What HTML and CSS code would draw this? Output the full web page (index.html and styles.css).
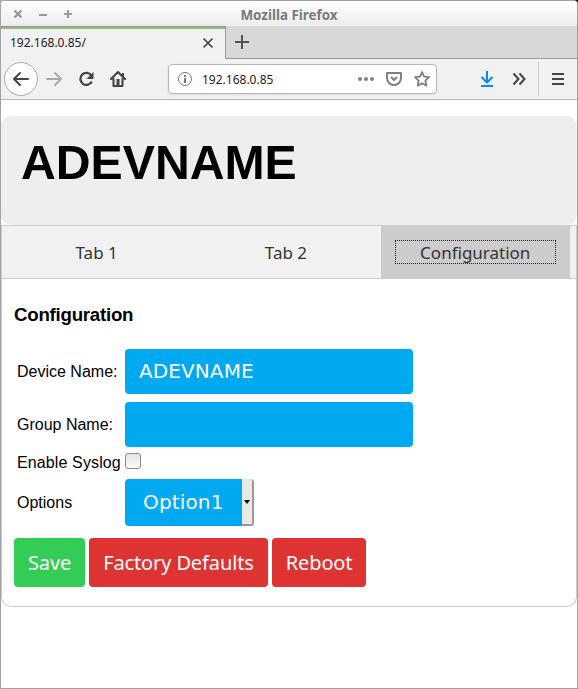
FILE: index.html
```html
<!DOCTYPE html>
<html lang="en">
<head>
<meta charset="utf-8">
<title>Mozilla Firefox</title>
<link rel="stylesheet" href="styles.css">
</head>
<body>
<div class="window">
  <header class="titlebar">
    <svg class="controls" width="76" height="26" viewBox="1 1 76 26" fill="none" stroke="#999" stroke-width="2">
      <path d="M14.5 10.5l7 7M21.5 10.5l-7 7" stroke-width="2.4"/><path d="M39 15h8M64 14h8M68 10v8"/>
    </svg>
    <span class="title">Mozilla Firefox</span>
  </header>
  <div class="tabstrip">
    <div class="browser-tab"><span>192.168.0.85/</span>
      <svg width="12" height="12" viewBox="0 0 12 12" fill="none" stroke="#444" stroke-width="1.7"><path d="M1.5 1.5l9 9M10.5 1.5l-9 9"/></svg>
    </div>
    <div class="new-tab"><svg width="14" height="14" viewBox="0 0 14 14" fill="none" stroke="#505050" stroke-width="2"><path d="M0 7h14M7 0v14"/></svg></div>
  </div>
  <div class="toolbar">
    <svg class="nav" width="160" height="40" viewBox="1 59 160 40" fill="none" stroke="#444" stroke-width="2" stroke-linecap="round" stroke-linejoin="round">
      <circle cx="21" cy="79" r="16.5" fill="#fff" stroke="#aaa" stroke-width="1"/>
      <path d="M28 79H14M20 73l-6 6 6 6"/>
      <path d="M47 79h14M55 73l6 6-6 6" stroke="#aaa"/>
      <path d="M91.3 75.5A6 6 0 1 0 91.8 81.5" stroke-width="2.3" stroke-linecap="butt"/>
      <path d="M93.5 72v7h-7z" fill="#444" stroke="none"/>
      <path d="M111 79l7-7 7 7M113.5 79v7h9v-7" stroke-width="2.1"/><path d="M123 73v3" stroke-linecap="butt"/>
      <path d="M116.5 79h3v7h-3z" fill="#444" stroke="none"/>
    </svg>
    <div class="urlbar">
      <svg width="16" height="16" viewBox="0 0 16 16" fill="none" stroke="#777"><circle cx="8" cy="8" r="6.5"/><path d="M8 7v5M8 4v2" stroke-width="2"/></svg>
      <span class="url">192.168.0.85</span>
      <svg width="76" height="20" viewBox="356 69 76 20" fill="none" stroke="#808080" stroke-width="2" stroke-linejoin="round">
        <g fill="#808080" stroke="none"><circle cx="360" cy="79" r="2"/><circle cx="366" cy="79" r="2"/><circle cx="372" cy="79" r="2"/></g>
        <path d="M387 73h14v5a7 7 0 0 1-14 0zM391 77l3 3 3-3"/>
        <path d="M422 72l2.1 4.600 4.900.6-3.600 3.400.9 5-4.300-2.400-4.300 2.400.9-5-3.600-3.400 4.900-.6z" stroke-width="1.8"/>
      </svg>
    </div>
    <svg class="tools" width="101" height="40" viewBox="476 59 101 40" fill="none" stroke="#444" stroke-width="2">
      <g stroke="#0a84ff"><path d="M487 71v11M481.500 77l5.500 5.500 5.500-5.500M481 86h12"/></g>
      <path d="M513.500 73.500l5 5.500-5 5.500M519.500 73.500l5 5.500-5 5.500"/>
      <path d="M538.500 62v34" stroke="#ccc" stroke-width="1"/>
      <path d="M552 74h12M552 79h12M552 84h12"/>
    </svg>
  </div>
  <main class="page">
    <div class="banner"><h1>ADEVNAME</h1></div>
    <nav class="tabs">
      <button>Tab 1</button><button>Tab 2</button><button class="active"><span>Configuration</span></button>
    </nav>
    <section class="panel">
      <h2>Configuration</h2>
      <div class="form">
        <label for="device">Device Name:</label><input id="device" class="field" value="ADEVNAME">
        <label for="group">Group Name:</label><input id="group" class="field">
        <label for="syslog" class="wide">Enable Syslog</label><input id="syslog" class="check" type="checkbox">
        <label>Options</label><div class="select"><span>Option1</span><i></i></div>
      </div>
      <div class="actions">
        <button class="save">Save</button><button>Factory Defaults</button><button>Reboot</button>
      </div>
    </section>
  </main>
</div>
</body>
</html>
```
FILE: styles.css
```css
* { box-sizing: border-box; }
body { margin: 0; background: linear-gradient(90deg, #aaa 50%, #000 50%); }
button, input { border: 0; margin: 0; padding: 0; }
svg { display: block; flex: none; }

.window {
  height: 689px;
  display: flex;
  flex-direction: column;
  border: 1px solid #a3a3a3;
  border-radius: 4px 4px 0 0;
  background: #fff;
  overflow: hidden;
  font-family: "Liberation Sans", sans-serif;
}
.titlebar {
  height: 25px;
  display: grid;
  grid-template-columns: 76px 1fr 76px;
  background: linear-gradient(#fff, #ececec);
}
.title {
  text-align: center;
  font: bold 13.4px/28px "Noto Sans", sans-serif;
  color: #7a7a7a;
}
.tabstrip { height: 33px; display: flex; background: #d8d8d8; }
.browser-tab {
  width: 225px;
  display: flex;
  align-items: center;
  justify-content: space-between;
  padding: 0 11px 1px 9px;
  border-top: 1px solid #999;
  border-right: 1px solid #999;
  box-shadow: inset 0 2px #9ab877;
  background: #f1f1f1;
  font: 12px "Noto Sans", sans-serif;
  color: #222;
}
.new-tab { flex: 1; padding: 9px; border-bottom: 1px solid #999; }
.toolbar {
  height: 41px;
  display: flex;
  align-items: center;
  border-bottom: 1px solid #b5b5b5;
  background: #f1f1f1;
}
.urlbar {
  width: 269px;
  height: 30px;
  display: flex;
  align-items: center;
  margin-left: 7px;
  padding: 0 4px 0 8px;
  border: 1px solid #b8b8b8;
  border-radius: 4px;
  background: #fff;
  box-shadow: 0 1px 3px #0001;
}
.url { flex: 1; padding-left: 9px; font: 12px "Noto Sans", sans-serif; color: #222; }
.tools { margin-left: auto; }

.page { padding-top: 16px; }
.banner { height: 109px; padding: 19px 20px; border-radius: 10px; background: #eee; }
h1 { margin: 0; font-size: 48.2px; line-height: 55px; }
.tabs {
  height: 54px;
  display: flex;
  border: 1px solid #ccc;
  background: #f1f1f1;
}
.tabs button {
  width: 189.300px;
  padding: 15px 14px 13px;
  background: none;
  font: 17px/24px "Noto Sans", sans-serif;
  color: #333;
}
.tabs .active { padding: 14px; background: #ccc; }
.active span {
  display: block;
  height: 24px;
  line-height: 26px;
  outline: 1px dotted #222;
  outline-offset: -1px;
}
.panel {
  height: 328px;
  padding: 25px 12px 0;
  border: 1px solid #ccc;
  border-top: 0;
  border-radius: 0 0 10px 10px;
}
h2 { margin: 0 0 23px; font-size: 18.700px; line-height: 22px; letter-spacing: -0.25px; }
.form {
  display: grid;
  grid-template-columns: 105px 288px;
  grid-template-rows: 45px 45px 16px 47px;
  row-gap: 8px;
  column-gap: 3px;
  align-items: center;
  padding-left: 3px;
  font-size: 16px;
}
.form label { white-space: nowrap; }
.form .wide { letter-spacing: 0.12px; }
.field {
  width: 288px;
  height: 45px;
  padding: 0 14px 2px;
  border-radius: 4px;
  background: #00a9f0;
  color: #fff;
  font: 20px "DejaVu Sans", sans-serif;
  letter-spacing: 0.1px;
}
.check {
  appearance: none;
  width: 16px;
  height: 16px;
  border: 1px solid #8c8c86;
  border-radius: 3px;
  background: linear-gradient(#e4e4e4, #fafafa);
  align-self: start;
  margin-top: -2px;
}
.select {
  width: 129px;
  height: 47px;
  display: flex;
  border-radius: 4px;
  overflow: hidden;
  background: #00a9f0;
  color: #fff;
  font: 20px/46px "DejaVu Sans", sans-serif;
  letter-spacing: 0.15px;
}
.select span { width: 117px; padding-left: 18px; }
.select i {
  width: 12px;
  display: grid;
  place-items: center;
  border-right: 2px solid #999;
  border-bottom: 2px solid #999;
  background: #e8e8e6;
}
.select i::before { content: ""; border: 3px solid transparent; border-top: 4px solid #000; border-bottom: 0; }
.actions { display: flex; gap: 4px; margin-top: 12px; }
.actions button {
  height: 49px;
  padding: 0 14px;
  border-radius: 4px;
  background: #dd3333;
  color: #fff;
  font: 20px "Noto Sans", sans-serif;
  letter-spacing: -0.12px;
}
.actions .save { background: #33cc55; }
```
